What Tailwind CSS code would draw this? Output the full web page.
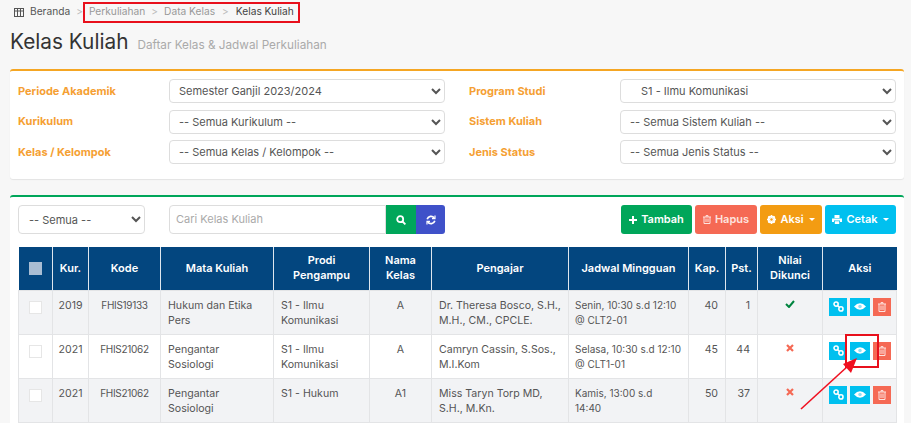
<!DOCTYPE html>
<html lang="en">
<head>
  <meta charset="UTF-8" />
  <title>Kelas Kuliah</title>
  <script src="https://cdn.jsdelivr.net/npm/@tailwindcss/browser@4"></script>
</head>
<body class="relative h-screen overflow-hidden bg-[#f7f7f7] font-['Inter',sans-serif] text-[11px] text-[#555]">

  <!-- breadcrumb -->
  <nav class="flex items-center h-[24px] pl-[14px] text-[10.2px] text-[#999]">
    <svg class="w-[10px] h-[9px] mr-[6px]" viewBox="0 0 10 9" fill="none" stroke="#555"><rect x=".5" y=".5" width="9" height="8"/><path d="M0 3h10M3.5 1v8M6.5 1v8" /></svg>
    <span class="text-[#555]">Beranda</span>
    <span class="mx-[6px] text-[#bbb]">&gt;</span>
    <span>Perkuliahan</span>
    <span class="mx-[6px] text-[#bbb]">&gt;</span>
    <span>Data Kelas</span>
    <span class="mx-[7px] text-[#bbb]">&gt;</span>
    <span class="text-[#444]">Kelas Kuliah</span>
  </nav>

  <!-- title -->
  <div class="flex items-baseline h-[45px] pl-[10px] pt-[3px]">
    <h1 class="text-[20.8px] leading-[30px] text-[#333]">Kelas Kuliah</h1>
    <span class="ml-[9px] text-[11.75px] text-[#aaa]">Daftar Kelas &amp; Jadwal Perkuliahan</span>
  </div>

  <!-- filter -->
  <section class="ml-[10px] mr-[7px] h-[110px] bg-white border-t-2 border-[#f5a623] rounded-[3px] px-[8px] pt-[8px] shadow-[0_1px_1px_rgba(0,0,0,0.08)]">
    <div class="grid grid-cols-[427px_428px] gap-x-[23px] gap-y-[6.5px]">
      <div class="flex items-center"><label class="w-[151px] font-bold text-[#f5a033]">Periode Akademik</label>
        <select class="w-[276px] h-[24px] pl-[5px] bg-white border border-[#ddd] rounded-[4px]"><option>Semester Ganjil 2023/2024</option></select></div>
      <div class="flex items-center"><label class="w-[152px] pl-[1px] font-bold text-[#f5a033]">Program Studi</label>
        <select class="w-[276px] h-[24px] pl-[16px] bg-white border border-[#ddd] rounded-[4px]"><option>S1 - Ilmu Komunikasi</option></select></div>
      <div class="flex items-center"><label class="w-[151px] font-bold text-[#f5a033]">Kurikulum</label>
        <select class="w-[276px] h-[24px] pl-[5px] bg-white border border-[#ddd] rounded-[4px]"><option>-- Semua Kurikulum --</option></select></div>
      <div class="flex items-center"><label class="w-[152px] pl-[1px] font-bold text-[#f5a033]">Sistem Kuliah</label>
        <select class="w-[276px] h-[24px] pl-[5px] bg-white border border-[#ddd] rounded-[4px]"><option>-- Semua Sistem Kuliah --</option></select></div>
      <div class="flex items-center"><label class="w-[151px] font-bold text-[#f5a033]">Kelas / Kelompok</label>
        <select class="w-[276px] h-[24px] pl-[5px] bg-white border border-[#ddd] rounded-[4px]"><option>-- Semua Kelas / Kelompok --</option></select></div>
      <div class="flex items-center"><label class="w-[152px] pl-[1px] font-bold text-[#f5a033]">Jenis Status</label>
        <select class="w-[276px] h-[24px] pl-[5px] bg-white border border-[#ddd] rounded-[4px]"><option>-- Semua Jenis Status --</option></select></div>
    </div>
  </section>

  <!-- data -->
  <section class="mt-[16px] ml-[10px] mr-[7px] bg-white border-t-2 border-[#00a65a] rounded-[3px] px-[8px] pt-[8px] pb-[20px]">
    <div class="flex h-[29px]">
      <select class="w-[127px] pl-[6px] bg-white border border-[#ddd] rounded-[4px]"><option>-- Semua --</option></select>
      <div class="flex ml-[24px] w-[276px]">
        <input placeholder="Cari Kelas Kuliah" class="flex-1 min-w-0 pl-[6px] border border-[#ddd] rounded-l-[4px] placeholder-[#aaa]" />
        <button class="w-[30px] flex items-center justify-center bg-[#00a65a]">
          <svg class="w-[10px] h-[10px]" viewBox="0 0 10 10" fill="none" stroke="#fff" stroke-width="1.8"><circle cx="4.2" cy="4.2" r="3"/><path d="M6.5 6.5 9.4 9.4"/></svg>
        </button>
        <button class="w-[29px] flex items-center justify-center bg-[#3f51c9] rounded-r-[3px]">
          <svg class="w-[10px] h-[10px]" viewBox="0 0 10 10" fill="none" stroke="#fff" stroke-width="1.7"><path d="M1.2 4.2A3.9 3.9 0 0 1 8.2 3M8.8 5.8A3.9 3.9 0 0 1 1.8 7"/><path d="M9 .6v3H6M1 9.4v-3h3" stroke-width="1.2"/></svg>
        </button>
      </div>
      <div class="flex ml-auto gap-[3px] font-semibold text-white">
        <button class="w-[71px] flex items-center justify-center gap-[4px] bg-[#00a65a] rounded-[3px]">
          <svg class="w-[8px] h-[8px]" viewBox="0 0 8 8" fill="#fff"><path d="M3 0h2v3h3v2H5v3H3V5H0V3h3z"/></svg>Tambah</button>
        <button class="w-[62px] flex items-center justify-center gap-[4px] bg-[#f56954] rounded-[3px] text-[#fde3df]">
          <svg class="w-[8px] h-[9px]" viewBox="0 0 8 9" fill="none" stroke="#fde3df"><path d="M0 2h8M3 2V.6h2V2M1 2v6.5h6V2M3 3.5v3.5M5 3.5v3.5"/></svg>Hapus</button>
        <button class="w-[62px] flex items-center justify-center gap-[4px] bg-[#f39c12] rounded-[3px]">
          <svg class="w-[9px] h-[9px]" viewBox="0 0 9 9"><circle cx="4.5" cy="4.5" r="3" fill="none" stroke="#fff" stroke-width="2"/><path d="M4.5 0v9M0 4.5h9M1.3 1.3l6.4 6.4M7.7 1.3 1.3 7.7" stroke="#fff"/><circle cx="4.5" cy="4.5" r="1.2" fill="#f39c12"/></svg>Aksi
          <span class="ml-[1px] border-x-[3px] border-t-[3px] border-x-transparent border-t-white"></span></button>
        <button class="w-[71px] flex items-center justify-center gap-[4px] bg-[#00c0ef] rounded-[3px]">
          <svg class="w-[10px] h-[9px]" viewBox="0 0 10 9" fill="#fff"><path d="M2.5 0h5v3h-5zM0 3.5h10V7H8V5.5H2V7H0zM2.8 6.2h4.4V9H2.8z"/></svg>Cetak
          <span class="ml-[1px] border-x-[3px] border-t-[3px] border-x-transparent border-t-white"></span></button>
      </div>
    </div>

    <table class="mt-[13px] w-[878px] table-fixed border-collapse text-[10.6px] leading-[15px]">
      <colgroup>
        <col class="w-[34px]"/><col class="w-[36px]"/><col class="w-[72px]"/><col class="w-[113px]"/><col class="w-[96px]"/><col class="w-[62px]"/><col class="w-[137px]"/><col class="w-[120px]"/><col class="w-[37px]"/><col class="w-[32px]"/><col class="w-[65px]"/><col class="w-[74px]"/>
      </colgroup>
      <thead class="bg-[#03467f] text-white text-center text-[11px]">
        <tr class="h-[43px]">
          <th class="border-r border-[#dfe6ee] font-semibold"><span class="block mx-auto w-[13px] h-[13px] bg-[#a9bdd3]"></span></th>
          <th class="border-r border-[#dfe6ee] font-semibold">Kur.</th>
          <th class="border-r border-[#dfe6ee] font-semibold">Kode</th>
          <th class="border-r border-[#dfe6ee] font-semibold">Mata Kuliah</th>
          <th class="border-r border-[#dfe6ee] font-semibold">Prodi<br/>Pengampu</th>
          <th class="border-r border-[#dfe6ee] font-semibold">Nama<br/>Kelas</th>
          <th class="border-r border-[#dfe6ee] font-semibold">Pengajar</th>
          <th class="border-r border-[#dfe6ee] font-semibold">Jadwal Mingguan</th>
          <th class="border-r border-[#dfe6ee] font-semibold">Kap.</th>
          <th class="border-r border-[#dfe6ee] font-semibold">Pst.</th>
          <th class="border-r border-[#dfe6ee] font-semibold">Nilai<br/>Dikunci</th>
          <th class="font-semibold">Aksi</th>
        </tr>
      </thead>
      <tbody class="[&_td]:border [&_td]:border-[#e3e4e6] [&_td]:align-top [&_td]:px-[7px] [&_td]:pt-[7px] [&_td]:pb-[6px] [&_td]:whitespace-nowrap">
        <tr class="h-[44px] bg-[#f2f3f5]">
          <td><span class="block mx-auto mt-[3px] w-[13px] h-[13px] bg-white border border-[#e6e6e6]"></span></td>
          <td class="text-center !px-0">2019</td>
          <td class="text-center !px-0 text-[10px] tracking-[-0.3px]">FHIS19133</td>
          <td>Hukum dan Etika<br/>Pers</td>
          <td>S1 - Ilmu<br/>Komunikasi</td>
          <td class="text-center">A</td>
          <td>Dr. Theresa Bosco, S.H.,<br/>M.H., CM., CPCLE.</td>
          <td class="!pl-[6px] text-[10px]">Senin, 10:30 s.d 12:10<br/>@ CLT2-01</td>
          <td class="text-right">40</td>
          <td class="text-right">1</td>
          <td class="text-center"><svg class="mx-auto mt-[2px] w-[10px] h-[8px]" viewBox="0 0 10 8" fill="none" stroke="#00843f" stroke-width="2"><path d="M1 4l3 3 5-6"/></svg></td>
          <td class="!p-0">
            <div class="flex gap-[3px] pl-[6px] pt-[7px]">
              <button class="w-[18px] h-[18px] flex items-center justify-center bg-[#00c0ef]"><svg class="w-[11px] h-[11px]" viewBox="0 0 10 10" fill="none" stroke="#fff" stroke-width="1.4"><circle cx="2.8" cy="2.8" r="1.9"/><circle cx="7.2" cy="7.2" r="1.9"/><path d="M3.8 3.8l2.4 2.4"/></svg></button>
              <button class="w-[20px] h-[18px] flex items-center justify-center bg-[#00c0ef]"><svg class="w-[12px] h-[9px]" viewBox="0 0 11 8"><path d="M0 4Q5.5-2 11 4 5.5 10 0 4z" fill="#fff"/><circle cx="5.5" cy="4" r="1.6" fill="#8fe0f7"/></svg></button>
              <button class="w-[18px] h-[18px] flex items-center justify-center bg-[#f56954]"><svg class="w-[8px] h-[10px]" viewBox="0 0 8 10" fill="none" stroke="#fde3df"><path d="M0 2h8M3 2V.6h2V2M1 2v7.5h6V2M3 3.5v4.5M5 3.5v4.5"/></svg></button>
            </div>
          </td>
        </tr>
        <tr class="h-[44px] bg-white">
          <td><span class="block mx-auto mt-[3px] w-[13px] h-[13px] bg-white border border-[#e6e6e6]"></span></td>
          <td class="text-center !px-0">2021</td>
          <td class="text-center !px-0 text-[10px] tracking-[-0.3px]">FHIS21062</td>
          <td>Pengantar<br/>Sosiologi</td>
          <td>S1 - Ilmu<br/>Komunikasi</td>
          <td class="text-center">A</td>
          <td>Camryn Cassin, S.Sos.,<br/>M.I.Kom</td>
          <td class="!pl-[6px] text-[10px]">Selasa, 10:30 s.d 12:10<br/>@ CLT1-01</td>
          <td class="text-right">45</td>
          <td class="text-right">44</td>
          <td class="text-center"><svg class="mx-auto mt-[2px] w-[8px] h-[8px]" viewBox="0 0 8 8" fill="none" stroke="#f56954" stroke-width="2.2"><path d="M1 1l6 6M7 1 1 7"/></svg></td>
          <td class="!p-0">
            <div class="flex gap-[3px] pl-[6px] pt-[7px]">
              <button class="w-[18px] h-[18px] flex items-center justify-center bg-[#00c0ef]"><svg class="w-[11px] h-[11px]" viewBox="0 0 10 10" fill="none" stroke="#fff" stroke-width="1.4"><circle cx="2.8" cy="2.8" r="1.9"/><circle cx="7.2" cy="7.2" r="1.9"/><path d="M3.8 3.8l2.4 2.4"/></svg></button>
              <button class="w-[20px] h-[18px] flex items-center justify-center bg-[#00c0ef]"><svg class="w-[12px] h-[9px]" viewBox="0 0 11 8"><path d="M0 4Q5.5-2 11 4 5.5 10 0 4z" fill="#fff"/><circle cx="5.5" cy="4" r="1.6" fill="#8fe0f7"/></svg></button>
              <button class="w-[18px] h-[18px] flex items-center justify-center bg-[#f56954]"><svg class="w-[8px] h-[10px]" viewBox="0 0 8 10" fill="none" stroke="#fde3df"><path d="M0 2h8M3 2V.6h2V2M1 2v7.5h6V2M3 3.5v4.5M5 3.5v4.5"/></svg></button>
            </div>
          </td>
        </tr>
        <tr class="h-[44px] bg-[#f2f3f5]">
          <td><span class="block mx-auto mt-[3px] w-[13px] h-[13px] bg-white border border-[#e6e6e6]"></span></td>
          <td class="text-center !px-0">2021</td>
          <td class="text-center !px-0 text-[10px] tracking-[-0.3px]">FHIS21062</td>
          <td>Pengantar<br/>Sosiologi</td>
          <td>S1 - Hukum</td>
          <td class="text-center">A1</td>
          <td>Miss Taryn Torp MD,<br/>S.H., M.Kn.</td>
          <td class="!pl-[6px] text-[10px]">Kamis, 13:00 s.d<br/>14:40</td>
          <td class="text-right">50</td>
          <td class="text-right">37</td>
          <td class="text-center"><svg class="mx-auto mt-[2px] w-[8px] h-[8px]" viewBox="0 0 8 8" fill="none" stroke="#f56954" stroke-width="2.2"><path d="M1 1l6 6M7 1 1 7"/></svg></td>
          <td class="!p-0">
            <div class="flex gap-[3px] pl-[6px] pt-[7px]">
              <button class="w-[18px] h-[18px] flex items-center justify-center bg-[#00c0ef]"><svg class="w-[11px] h-[11px]" viewBox="0 0 10 10" fill="none" stroke="#fff" stroke-width="1.4"><circle cx="2.8" cy="2.8" r="1.9"/><circle cx="7.2" cy="7.2" r="1.9"/><path d="M3.8 3.8l2.4 2.4"/></svg></button>
              <button class="w-[20px] h-[18px] flex items-center justify-center bg-[#00c0ef]"><svg class="w-[12px] h-[9px]" viewBox="0 0 11 8"><path d="M0 4Q5.5-2 11 4 5.5 10 0 4z" fill="#fff"/><circle cx="5.5" cy="4" r="1.6" fill="#8fe0f7"/></svg></button>
              <button class="w-[18px] h-[18px] flex items-center justify-center bg-[#f56954]"><svg class="w-[8px] h-[10px]" viewBox="0 0 8 10" fill="none" stroke="#fde3df"><path d="M0 2h8M3 2V.6h2V2M1 2v7.5h6V2M3 3.5v4.5M5 3.5v4.5"/></svg></button>
            </div>
          </td>
        </tr>
      </tbody>
    </table>
  </section>

  <!-- annotations on top of the screenshot -->
  <div class="absolute left-[83px] top-[2px] w-[217px] h-[21px] border-2 border-[#e8101c]"></div>
  <div class="absolute left-[845px] top-[334px] w-[34px] h-[34px] border-2 border-[#e8101c]"></div>
  <svg class="absolute left-0 top-0 w-[911px] h-[423px] pointer-events-none" viewBox="0 0 911 423">
    <path d="M801 409 848 366" stroke="#f01020" stroke-width="1.6"/>
    <polygon points="857,358 843,364 851,373" fill="#f01020"/>
  </svg>
</body>
</html>
